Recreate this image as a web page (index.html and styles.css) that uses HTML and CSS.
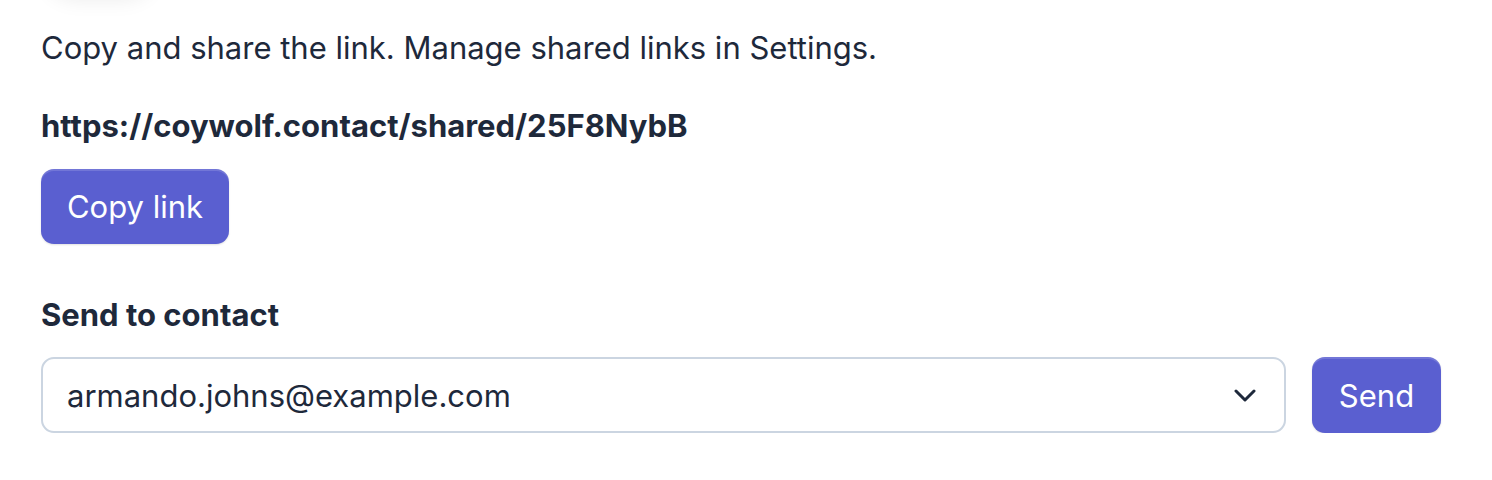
FILE: index.html
```html
<!DOCTYPE html>
<html>
<head>
<meta charset="utf-8">
<link rel="stylesheet" href="styles.css">
</head>
<body>
<div class="page">
  <div class="ghost"></div>
  <p class="intro">Copy and share the link. Manage shared links in Settings.</p>
  <p class="url">https://coywolf.contact/shared/25F8NybB</p>
  <button class="btn btn-copy">Copy link</button>
  <h3 class="label">Send to contact</h3>
  <div class="send-row">
    <div class="select">
      <span class="select-value">armando.johns@example.com</span>
      <svg class="chev" width="22" height="13" viewBox="0 0 22 13"><path d="M2 2 L11 11 L20 2" fill="none" stroke="#1e293b" stroke-width="3" stroke-linecap="round" stroke-linejoin="round"/></svg>
    </div>
    <button class="btn btn-send">Send</button>
  </div>
</div>
</body>
</html>
```
FILE: styles.css
```css
* { box-sizing: border-box; }
html, body { margin: 0; padding: 0; background: #fff; }
body {
  font-family: Inter, "Noto Sans", sans-serif;
  color: #1e293b;
  overflow: hidden;
}
.page {
  position: relative;
  padding: 26px 51px 0 41px;
}
.ghost {
  position: absolute;
  left: 45px;
  top: -70px;
  width: 110px;
  height: 62px;
  border-radius: 31px;
  background: #fff;
  box-shadow: 0 6px 22px rgba(0,0,0,0.09);
}
.intro {
  margin: 0;
  font-size: 31px;
  line-height: 44px;
  font-weight: 400;
}
.url {
  margin: 34px 0 0;
  font-size: 31px;
  line-height: 44px;
  font-weight: 700;
}
.btn {
  border: none;
  background: #5a5fd0;
  color: #fff;
  font-family: Inter, "Noto Sans", sans-serif;
  font-size: 31px;
  border-radius: 13px;
  box-shadow: inset 0 2px 0 rgba(255,255,255,0.15), 0 1px 2px rgba(0,0,0,0.12);
  cursor: pointer;
}
.btn-copy {
  display: block;
  margin-top: 21px;
  width: 188px;
  height: 75px;
}
.label {
  margin: 49px 0 0;
  font-size: 31px;
  line-height: 44px;
  font-weight: 700;
}
.send-row {
  display: flex;
  gap: 26px;
  margin-top: 20px;
  align-items: stretch;
}
.select {
  flex: 1;
  height: 76px;
  border: 2px solid #cbd5e1;
  border-radius: 13px;
  display: flex;
  align-items: center;
  justify-content: space-between;
  padding: 0 28px 0 24px;
  font-size: 31px;
}
.btn-send {
  width: 129px;
  height: 76px;
}
```
